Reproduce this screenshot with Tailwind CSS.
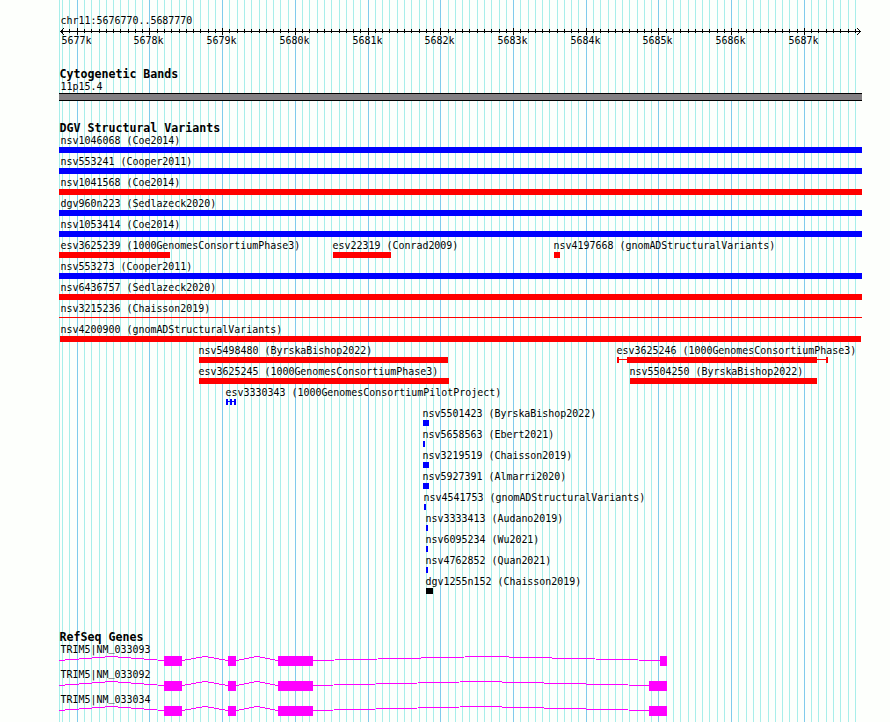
<!DOCTYPE html>
<html lang="en">
<head>
  <meta charset="UTF-8">
  <title>chr11:5676770..5687770</title>
  <script src="https://cdn.jsdelivr.net/npm/@tailwindcss/browser@4"></script>
</head>
<body class="bg-[#fdfffc]">
  <main class="relative isolate w-[890px] h-[722px] overflow-hidden text-black font-['DejaVu_Sans_Mono',monospace] text-[9.967px] leading-[12px] whitespace-nowrap">
    <!-- Grid lines behind every track -->
    <svg id="grid" class="absolute inset-0 -z-10" width="890" height="722" shape-rendering="crispEdges"></svg>

    <!-- Ruler -->
    <section class="pt-[15px]">
      <p class="pl-[60.5px]">chr11:5676770..5687770</p>
      <svg id="ruler" class="block" width="890" height="8" shape-rendering="crispEdges"></svg>
      <div id="rulerLabels" class="grid h-3"></div>
    </section>

    <!-- Cytogenetic bands -->
    <section class="pt-5">
      <h2 class="pl-[59.5px] h-[14px] leading-[14px] text-[11.627px] font-bold">Cytogenetic Bands</h2>
      <p class="pl-[60.5px]">11p15.4</p>
      <div class="ml-[59px] w-[803px] h-2 bg-[#838083] border-y border-black"></div>
    </section>

    <!-- Structural variants -->
    <section class="pt-5">
      <h2 class="pl-[59.5px] h-[14px] leading-[14px] text-[11.627px] font-bold">DGV Structural Variants</h2>
      <div id="variants"></div>
    </section>

    <!-- Genes -->
    <section class="pt-[33px]">
      <h2 class="pl-[59.5px] h-[14px] leading-[14px] text-[11.627px] font-bold">RefSeq Genes</h2>
      <div id="genes"></div>
    </section>
  </main>

  <script>
    const START = 5676770;
    const toX = pos => Math.round(60 + (pos - START) * 800 / 11001);
    const rect = (x, y, w, h, fill) => `<rect x="${x}" y="${y}" width="${w}" height="${h}" fill="${fill}"/>`;

    // Grid and ruler
    let grid = rect(59, 0, 1, 722, '#a8eeea');
    let ruler = rect(60, 4, 801, 1, '#000');
    let labels = '';
    for (let pos = 5676800; pos <= 5687700; pos += 100) {
      const x = toX(pos);
      const major = pos % 1000 === 0;
      grid += rect(x, 0, 1, 722, major ? '#80cbec' : '#a8eeea');
      ruler += major ? rect(x, 1, 1, 7, '#000') : rect(x, 2, 1, 4, '#000');
      if (major) {
        labels += `<span class="[grid-area:1/1]" style="margin-left:${x - 15.5}px">${pos / 1000}k</span>`;
      }
    }
    for (let i = 1; i < 4; i++) {
      ruler += rect(60 + i, 4 - i, 1, 1, '#000') + rect(60 + i, 4 + i, 1, 1, '#000');
      ruler += rect(860 - i, 4 - i, 1, 1, '#000') + rect(860 - i, 4 + i, 1, 1, '#000');
    }
    document.getElementById('grid').innerHTML = grid;
    document.getElementById('ruler').innerHTML = ruler;
    document.getElementById('rulerLabels').innerHTML = labels;

    // One array per row: [label, label x, colour, blocks [x1, x2], thin line [x1, x2]]
    const B = '#0000ff', R = '#ff0000', K = '#000000';
    const rows = [
      [['nsv1046068 (Coe2014)', 60, B, [[59, 862]]]],
      [['nsv553241 (Cooper2011)', 60, B, [[59, 862]]]],
      [['nsv1041568 (Coe2014)', 60, R, [[59, 862]]]],
      [['dgv960n223 (Sedlazeck2020)', 60, B, [[59, 862]]]],
      [['nsv1053414 (Coe2014)', 60, B, [[59, 862]]]],
      [
        ['esv3625239 (1000GenomesConsortiumPhase3)', 60, R, [[59, 170]]],
        ['esv22319 (Conrad2009)', 332, R, [[333, 391]]],
        ['nsv4197668 (gnomADStructuralVariants)', 553, R, [[554, 560]]],
      ],
      [['nsv553273 (Cooper2011)', 60, B, [[59, 862]]]],
      [['nsv6436757 (Sedlazeck2020)', 60, R, [[59, 862]]]],
      [['nsv3215236 (Chaisson2019)', 60, R, [], [59, 862]]],
      [['nsv4200900 (gnomADStructuralVariants)', 60, R, [[60, 861]]]],
      [
        ['nsv5498480 (ByrskaBishop2022)', 198, R, [[199, 448]]],
        ['esv3625246 (1000GenomesConsortiumPhase3)', 616, R, [[617, 619], [627, 817], [826, 828]], [617, 828]],
      ],
      [
        ['esv3625245 (1000GenomesConsortiumPhase3)', 198, R, [[199, 449]]],
        ['nsv5504250 (ByrskaBishop2022)', 629, R, [[630, 817]]],
      ],
      [['esv3330343 (1000GenomesConsortiumPilotProject)', 225, B, [[226, 228], [230, 232], [234, 236]], [226, 236]]],
      [['nsv5501423 (ByrskaBishop2022)', 422, B, [[423, 429]]]],
      [['nsv5658563 (Ebert2021)', 422, B, [[423, 425]]]],
      [['nsv3219519 (Chaisson2019)', 422, B, [[423, 429]]]],
      [['nsv5927391 (Almarri2020)', 422, B, [[423, 429]]]],
      [['nsv4541753 (gnomADStructuralVariants)', 423, B, [[424, 426]]]],
      [['nsv3333413 (Audano2019)', 425, B, [[426, 428]]]],
      [['nsv6095234 (Wu2021)', 425, B, [[426, 428]]]],
      [['nsv4762852 (Quan2021)', 425, B, [[426, 428]]]],
      [['dgv1255n152 (Chaisson2019)', 425, K, [[426, 433]]]],
    ];
    document.getElementById('variants').innerHTML = rows.map(row => {
      let names = '', shapes = '';
      row.forEach(([name, x, color, blocks, line]) => {
        names += `<span class="[grid-area:1/1]" style="margin-left:${x + 0.5}px">${name}</span>`;
        if (line) shapes += rect(line[0], 2, line[1] - line[0], 1, color);
        blocks.forEach(([a, b]) => { shapes += rect(a, 0, b - a, 6, color); });
      });
      return `<div class="h-[21px]"><div class="grid h-3">${names}</div><svg class="block" width="890" height="6" shape-rendering="crispEdges">${shapes}</svg></div>`;
    }).join('');

    // Genes: exons as blocks, introns as peaked lines between them
    const genes = [['TRIM5|NM_033093', 660], ['TRIM5|NM_033092', 649], ['TRIM5|NM_033034', 649]];
    document.getElementById('genes').innerHTML = genes.map(([name, last]) => {
      const exons = [[164, 182], [228, 236], [278, 313], [last, 667]];
      const label = name.replace('_', '<span class="relative -top-0.5">_</span>');
      let from = 59, shapes = '';
      exons.forEach(([a, b]) => {
        shapes += `<polyline points="${from},4.5 ${(from + a) / 2},0.5 ${a},4.5" fill="none" stroke="#ff00ff"/>`;
        shapes += rect(a, 0, b - a, 10, '#ff00ff');
        from = b;
      });
      return `<div class="h-[25px]"><p class="pl-[60.5px]">${label}</p><svg class="block" width="890" height="10" shape-rendering="crispEdges">${shapes}</svg></div>`;
    }).join('');
  </script>
</body>
</html>
